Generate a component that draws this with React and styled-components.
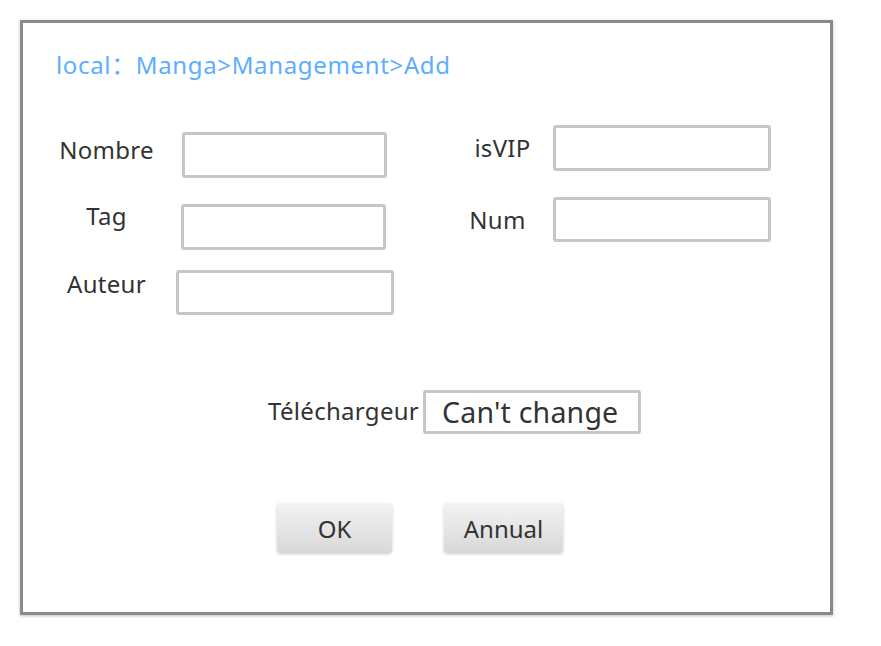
import React from 'react'
import styled, { createGlobalStyle } from 'styled-components'

const Global = createGlobalStyle`
  html, body {
    margin: 0;
    padding: 0;
    background: #fff;
  }
  body {
    font-family: "Noto Sans", "Noto Sans CJK SC", sans-serif;
    color: #333;
  }
`

const Page = styled.div`
  padding: 20px;
`

const Frame = styled.div`
  box-sizing: border-box;
  width: 813px;
  height: 595px;
  border: 3px solid #8a8a8a;
  box-shadow: 0 1px 3px rgba(0, 0, 0, 0.25);
  padding: 27px 0 0 35px;
`

const Breadcrumb = styled.div`
  font-size: 24px;
  letter-spacing: 0.65px;
  line-height: 30px;
  color: #5eaeff;
  margin-left: -2px;
`

const Columns = styled.div`
  display: grid;
  grid-template-columns: 407px auto;
  margin-top: 45px;
  align-items: start;
`

const Column = styled.div`
  display: flex;
  flex-direction: column;
  margin-top: ${p => p.$top || 0}px;
`

const Field = styled.div`
  display: flex;
  align-items: flex-start;
  margin-top: ${p => p.$top || 0}px;
  margin-left: ${p => p.$left || 0}px;
`

const Label = styled.div`
  box-sizing: border-box;
  width: ${p => (p.$w ? `${p.$w}px` : 'auto')};
  padding-right: ${p => p.$pr || 0}px;
  margin-top: ${p => p.$dy || 0}px;
  text-align: center;
  font-size: 24px;
  letter-spacing: 0.3px;
  line-height: 30px;
  color: #333;
  white-space: nowrap;
`

const Box = styled.div`
  box-sizing: border-box;
  flex: none;
  width: ${p => p.$w}px;
  height: ${p => p.$h}px;
  margin-left: ${p => p.$gap}px;
  border: 3px solid #c6c6c6;
  border-radius: 3px;
  background: #fff;
  display: flex;
  align-items: center;
  padding-left: 16px;
  font-size: 28.5px;
  letter-spacing: 0.2px;
  color: #333;
  white-space: nowrap;
`

const Buttons = styled.div`
  display: flex;
  gap: 52px;
  margin-top: 69px;
  margin-left: 219px;
`

const Button = styled.button`
  box-sizing: border-box;
  width: ${p => p.$w}px;
  height: 50px;
  border: none;
  border-radius: 4px;
  background: linear-gradient(#f3f3f3, #d8d8d8);
  box-shadow: 0 1px 3px rgba(0, 0, 0, 0.22);
  font-family: "Noto Sans", sans-serif;
  font-size: 24px;
  color: #333;
  padding: 0;
  cursor: pointer;
`

export default function App() {
  return (
    <Page>
      <Global />
      <Frame>
        <Breadcrumb>local：Manga&gt;Management&gt;Add</Breadcrumb>
        <Columns>
          <Column $top={7}>
            <Field>
              <Label $w={97} $dy={3}>Nombre</Label>
              <Box $gap={27} $w={205} $h={46} />
            </Field>
            <Field $top={26}>
              <Label $w={97} $dy={-3}>Tag</Label>
              <Box $gap={26} $w={205} $h={46} />
            </Field>
            <Field $top={20}>
              <Label $w={97} $dy={-1}>Auteur</Label>
              <Box $gap={21} $w={218} $h={45} />
            </Field>
          </Column>
          <Column>
            <Field>
              <Label $w={75} $dy={8}>isVIP</Label>
              <Box $gap={13} $w={218} $h={46} />
            </Field>
            <Field $top={26}>
              <Label $w={75} $pr={10} $dy={8}>Num</Label>
              <Box $gap={13} $w={218} $h={45} />
            </Field>
          </Column>
        </Columns>
        <Field $top={75} $left={210}>
          <Label $dy={6}>Téléchargeur</Label>
          <Box $gap={4} $w={218} $h={44}>Can't change</Box>
        </Field>
        <Buttons>
          <Button $w={115}>OK</Button>
          <Button $w={119}>Annual</Button>
        </Buttons>
      </Frame>
    </Page>
  )
}
